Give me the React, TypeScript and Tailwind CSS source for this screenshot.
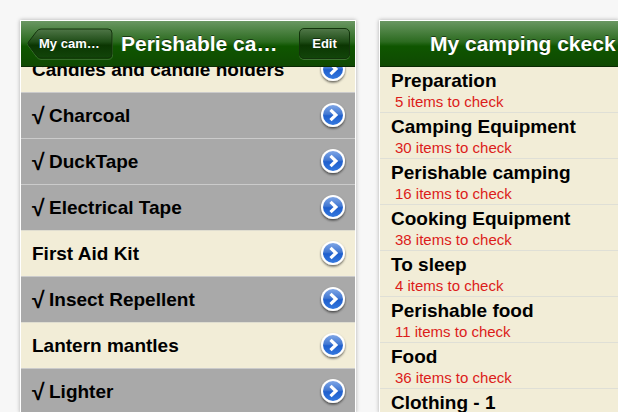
type Item = {
  name: string;
  checked?: boolean;
};

const items: Item[] = [
  { name: 'Candles and candle holders' },
  { name: 'Charcoal', checked: true },
  { name: 'DuckTape', checked: true },
  { name: 'Electrical Tape', checked: true },
  { name: 'First Aid Kit' },
  { name: 'Insect Repellent', checked: true },
  { name: 'Lantern mantles' },
  { name: 'Lighter', checked: true },
];

const lists = [
  { name: 'Preparation', count: 5 },
  { name: 'Camping Equipment', count: 30 },
  { name: 'Perishable camping', count: 16 },
  { name: 'Cooking Equipment', count: 38 },
  { name: 'To sleep', count: 4 },
  { name: 'Perishable food', count: 11 },
  { name: 'Food', count: 36 },
  { name: 'Clothing - 1', count: null },
];

const barStyle =
  'relative z-10 flex h-[46px] shrink-0 items-center border-b border-[#0a2a03] bg-[linear-gradient(to_bottom,#6a9762_0%,#2c6b20_46%,#0f5600_56%,#0f4902_100%)] text-white';

function DisclosureIcon() {
  return (
    <svg viewBox="0 0 28 30" className="h-[30px] w-7" aria-hidden="true">
      <defs>
        <linearGradient id="disc" x1="0" y1="0" x2="0" y2="1">
          <stop offset="0" stopColor="#7fa6e6" />
          <stop offset="0.46" stopColor="#4278d2" />
          <stop offset="0.54" stopColor="#1f5fcd" />
          <stop offset="1" stopColor="#3478de" />
        </linearGradient>
        <filter id="drop" x="-20%" y="-20%" width="140%" height="150%">
          <feDropShadow dx="0" dy="1.5" stdDeviation="1" floodColor="#000" floodOpacity="0.6" />
        </filter>
      </defs>
      <circle cx="14" cy="14" r="12" fill="#fff" filter="url(#drop)" />
      <circle cx="14" cy="14" r="10" fill="url(#disc)" />
      <path d="M11.500 8.800l5.400 5.200-5.400 5.200" fill="none" stroke="#fff" strokeWidth="3.2" />
    </svg>
  );
}

function BackButton() {
  return (
    <button type="button" className="relative h-8 w-[86px] shrink-0 pl-3 text-left text-[13px] leading-4 font-bold">
      <svg viewBox="0 0 86 32" preserveAspectRatio="none" className="absolute inset-0 h-full w-full" aria-hidden="true">
        <defs>
          <linearGradient id="back" x1="0" y1="0" x2="0" y2="1">
            <stop offset="0" stopColor="#4f7647" />
            <stop offset="0.44" stopColor="#1f4d17" />
            <stop offset="0.56" stopColor="#0b3602" />
            <stop offset="1" stopColor="#12450a" />
          </linearGradient>
        </defs>
        <path d="M14 1.500H81Q85.500 1.500 85.500 6V27Q85.500 31.500 81 31.500H14Q11.500 31.500 9.500 29L1.500 18Q0 16.500 1.500 15L9.500 4Q11.500 1.500 14 1.500Z" fill="none" stroke="#5c8a52" strokeOpacity="0.5" />
        <path d="M14 1H81Q85 1 85 5V26Q85 30 81 30H14Q11.500 30 9.500 27.500L1.500 17Q0.500 15.500 1.500 14L9.500 3.500Q11.500 1 14 1Z" fill="url(#back)" stroke="#12330b" />
      </svg>
      <span className="relative [text-shadow:0_-1px_0_rgba(0,0,0,0.5)]">My cam…</span>
    </button>
  );
}

function ItemRow({ item }: { item: Item }) {
  return (
    <li
      className={`flex h-[46px] shrink-0 items-center justify-between border-t pr-2 pl-[11px] ${
        item.checked ? 'border-[#cbcbcb] bg-[#a9a9a9]' : 'border-[#dfddd0] bg-[#f2edd7]'
      }`}
    >
      <span className="flex h-6 text-[19px] leading-6 font-bold whitespace-nowrap">
        {item.checked && <span className="w-[17px] text-[23px] leading-6">√</span>}
        {item.name}
      </span>
      <button type="button" aria-label={`Details for ${item.name}`} className="shrink-0">
        <DisclosureIcon />
      </button>
    </li>
  );
}

function ItemsScreen() {
  return (
    <section className="flex min-w-0 flex-col overflow-hidden shadow-[0_0_4px_1px_rgba(0,0,0,0.3)] outline outline-white">
      <header className={`${barStyle} pr-[5px] pl-1.5`}>
        <BackButton />
        <h1 className="flex-1 pl-2 text-[21px] leading-6 font-bold whitespace-nowrap [text-shadow:0_-1px_0_rgba(0,0,0,0.5)]">
          Perishable ca…
        </h1>
        <button
          type="button"
          className="h-[31px] w-[51px] shrink-0 rounded-[5px] border border-[#12330b] bg-[linear-gradient(to_bottom,#4f7647_0%,#1f4d17_44%,#0b3602_56%,#12450a_100%)] text-[13px] leading-4 font-bold shadow-[0_1px_0_rgba(110,155,100,0.5)] [text-shadow:0_-1px_0_rgba(0,0,0,0.5)]"
        >
          Edit
        </button>
      </header>
      {/* list is scrolled a little, the first row slides under the bar */}
      <ul className="-mt-[21px] flex flex-col">
        {items.map((item) => (
          <ItemRow key={item.name} item={item} />
        ))}
      </ul>
    </section>
  );
}

function ListsScreen() {
  return (
    <section className="flex min-w-0 flex-col overflow-hidden bg-[#f2edd7] shadow-[0_0_4px_1px_rgba(0,0,0,0.3)] outline outline-white">
      <header className={`${barStyle} pl-[50px]`}>
        <h2 className="text-[21px] leading-6 font-bold whitespace-nowrap [text-shadow:0_-1px_0_rgba(0,0,0,0.5)]">
          My camping ckeck
        </h2>
      </header>
      <ul className="flex flex-col">
        {lists.map((list) => (
          <li key={list.name} className="h-[46px] shrink-0 border-b border-[#dfdfd6]">
            <a href="#" className="flex flex-col pt-0.5 pl-[11px] whitespace-nowrap">
              <span className="text-[19px] leading-6 font-bold">{list.name}</span>
              {list.count !== null && (
                <span className="pl-1 text-[15px] leading-[18px] text-[#dc1c1a]">{list.count} items to check</span>
              )}
            </a>
          </li>
        ))}
      </ul>
    </section>
  );
}

export default function App() {
  return (
    <main className="grid h-screen grid-cols-[334fr_238fr] gap-[25px] overflow-hidden bg-[#f7f7f7] pt-[21px] pl-[21px] font-['Liberation_Sans',Arial,sans-serif] text-black">
      <ItemsScreen />
      <ListsScreen />
    </main>
  );
}
